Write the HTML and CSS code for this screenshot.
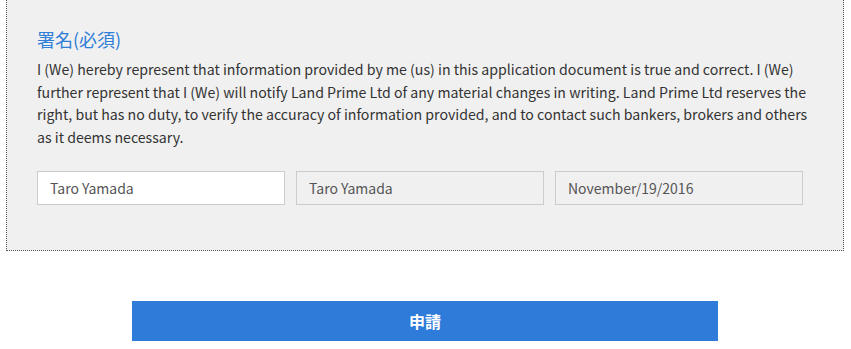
FILE: index.html
```html
<!DOCTYPE html>
<html lang="ja">
<head>
  <meta charset="UTF-8">
  <meta name="viewport" content="width=device-width, initial-scale=1.0">
  <title>署名</title>
  <link rel="stylesheet" href="styles.css">
</head>
<body>
  <div class="page">
    <section class="sign-box">
      <h2 class="sign-title">署名(必須)</h2>
      <p class="sign-text">I (We) hereby represent that information provided by me (us) in this application document is true and correct. I (We) further represent that I (We) will notify Land Prime Ltd of any material changes in writing. Land Prime Ltd reserves the right, but has no duty, to verify the accuracy of information provided, and to contact such bankers, brokers and others as it deems necessary.</p>
      <div class="sign-fields">
        <input class="field" type="text" value="Taro Yamada">
        <input class="field field-readonly" type="text" value="Taro Yamada" readonly>
        <input class="field field-readonly" type="text" value="November/19/2016" readonly>
      </div>
    </section>

    <div class="actions">
      <button class="submit-btn" type="button">申請</button>
    </div>
  </div>
</body>
</html>
```

FILE: styles.css
```css
/* General Styles */
body {
  margin: 0;
  font-family: "Noto Sans CJK JP", "Noto Sans", sans-serif;
  color: #333;
  background: #fff;
}

.page {
  padding: 0 7px 0 6px;
}

.sign-box {
  margin-top: -10px;
  padding: 35px 30px 45px 30px;
  background: #f0f0f0;
  border: 1px dotted #555;
}

.sign-title {
  margin: 0 0 6px;
  font-size: 18px;
  font-weight: normal;
  line-height: 26px;
  color: #2f7ed8;
}

.sign-text {
  margin: 0 0 22px;
  font-size: 14.15px;
  line-height: 22.7px;
  color: #333;
}

.sign-fields {
  display: flex;
  gap: 11px;
}

.field {
  box-sizing: border-box;
  width: 248px;
  height: 34px;
  margin: 0;
  padding: 0 12px;
  font-family: inherit;
  font-size: 14px;
  color: #555;
  background: #fff;
  border: 1px solid #ccc;
  border-radius: 0;
  outline: none;
}

.field-readonly {
  background: #f0f0f0;
}

.actions {
  display: flex;
  justify-content: center;
  padding-top: 50px;
}

.submit-btn {
  width: 586px;
  height: 40px;
  padding: 0;
  font-family: inherit;
  font-size: 16px;
  font-weight: bold;
  color: #fff;
  background: #2f7bd9;
  border: none;
  border-radius: 0;
  cursor: pointer;
}
```
